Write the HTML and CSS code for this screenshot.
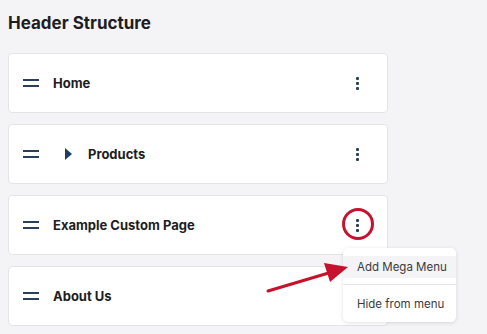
FILE: index.html
```html
<!DOCTYPE html>
<html>
<head>
<meta charset="utf-8">
<link rel="stylesheet" href="styles.css">
</head>
<body>
<h1 class="title">Header Structure</h1>
<div class="list">
  <div class="card">
    <span class="handle"></span>
    <span class="label">Home</span>
    <span class="kebab"><i></i><i></i><i></i></span>
  </div>
  <div class="card">
    <span class="handle"></span>
    <span class="caret"></span>
    <span class="label">Products</span>
    <span class="kebab"><i></i><i></i><i></i></span>
  </div>
  <div class="card">
    <span class="handle"></span>
    <span class="label">Example Custom Page</span>
    <span class="kebab active"><i></i><i></i><i></i><span class="ring"></span>
      <div class="menu">
        <div class="menu-item hl">Add Mega Menu</div>
        <div class="sep"></div>
        <div class="menu-item">Hide from menu</div>
      </div>
    </span>
  </div>
  <div class="card">
    <span class="handle"></span>
    <span class="label">About Us</span>
  </div>
</div>
<svg class="arrow" width="90" height="40" viewBox="0 0 90 40">
  <line x1="2" y1="32" x2="66" y2="13" stroke="#c4122f" stroke-width="3" stroke-linecap="round"/>
  <polygon points="82,8 58,4 64,23" fill="#c4122f"/>
</svg>
</body>
</html>
```
FILE: styles.css
```css
html, body { margin: 0; padding: 0; }
body {
  background: #f4f4f6;
  font-family: Inter, "Noto Sans", sans-serif;
  color: #1d1d22;
  width: 487px;
  height: 334px;
  overflow: hidden;
  position: relative;
}
.title {
  margin: 0;
  padding: 13px 0 0 8px;
  font-size: 17px;
  font-weight: 700;
  line-height: 21px;
  color: #1d1d22;
}
.list {
  display: flex;
  flex-direction: column;
  gap: 11px;
  margin: 19px 0 0 8px;
  width: 380px;
}
.card {
  height: 58px;
  background: #fff;
  border: 1px solid #e4e4e7;
  border-radius: 4px;
  display: flex;
  align-items: center;
  padding: 0 0 0 14px;
  position: relative;
}
.handle {
  width: 16px;
  border-top: 2.5px solid #28405a;
  border-bottom: 2.5px solid #28405a;
  box-sizing: border-box;
  height: 7.5px;
  margin-right: 14px;
  flex: none;
}
.caret {
  width: 0;
  height: 0;
  border-left: 7px solid #1f3d63;
  border-top: 6px solid transparent;
  border-bottom: 6px solid transparent;
  margin: 0 16px 0 12px;
}
.label {
  font-size: 13px;
  font-weight: 700;
  color: #1d1d22;
  flex: 1;
}
.kebab {
  width: 4px;
  display: flex;
  flex-direction: column;
  gap: 2px;
  margin-right: 27px;
  position: relative;
}
.kebab i {
  display: block;
  width: 3px;
  height: 3px;
  border-radius: 1px;
  background: #2a3f55;
}
.ring {
  position: absolute;
  left: -14px;
  top: -11px;
  width: 26px;
  height: 26px;
  border: 3px solid #c4122f;
  border-radius: 50%;
}
.menu {
  position: absolute;
  left: -13px;
  top: 29px;
  width: 113px;
  background: #fff;
  border-radius: 5px;
  box-shadow: 0 1px 4px rgba(0,0,0,0.12);
  padding: 8px 0 7px;
  z-index: 2;
}
.menu-item {
  font-size: 11.5px;
  color: #3a3a40;
  padding: 0 0 0 14px;
  height: 22px;
  line-height: 22px;
  white-space: nowrap;
}
.menu-item.hl { background: #f4f4f6; }
.sep {
  height: 1px;
  background: #e6e6ea;
  margin: 6px 0 8px;
}
.arrow {
  position: absolute;
  left: 266px;
  top: 259px;
  z-index: 3;
}
```
